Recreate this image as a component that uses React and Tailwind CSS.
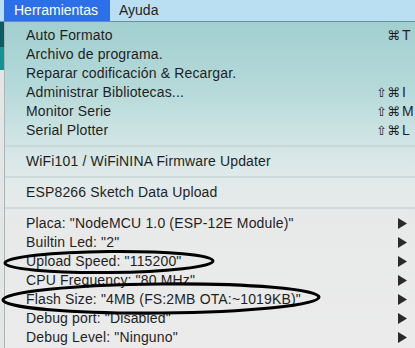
import React from "react";

const Arrow = () => (
  <svg width="9" height="11" viewBox="0 0 9 11" className="block">
    <polygon points="0,0 9,5.5 0,11" fill="#2a2a2a" />
  </svg>
);

function Row({ label, mods, keyc, arrow }) {
  return (
    <div className="h-[19px] flex items-center relative">
      <span className="pl-[21px] whitespace-nowrap tracking-[0.15px]">{label}</span>
      {keyc && (
        <span className="absolute left-[363px] top-0 h-[19px] flex items-center">
          <span className="w-[32px] text-right font-['DejaVu_Sans',sans-serif] text-[13px] whitespace-nowrap">{mods}</span>
          <span className="pl-[2px]">{keyc}</span>
        </span>
      )}
      {arrow && (
        <span className="absolute left-[393px] top-[4px]">
          <Arrow />
        </span>
      )}
    </div>
  );
}

const Sep = () => (
  <div className="h-[12px] flex items-center">
    <div className="h-[2px] w-full bg-[#c9d4d4]/80" />
  </div>
);

export default function App() {
  return (
    <div className="w-[415px] h-[348px] overflow-hidden relative font-['Liberation_Sans',Arial,sans-serif] text-[14px] text-[#1f1f1f] bg-[#e8e8e8]">
      <div className="h-[22px] flex items-stretch bg-[#bbdff2] border-b border-[#6a9199]">
        <div className="w-[4px]" />
        <div className="bg-[#2c6fe9] text-white flex items-center pl-[10px] pr-[9px] w-[106px]">Herramientas</div>
        <div className="flex items-center pl-[9px]">Ayuda</div>
      </div>
      <div className="flex h-[326px]">
        <div className="w-[4px] flex flex-col">
          <div className="h-[25px] bg-[#0b5d62]" />
          <div className="h-[23px] bg-[#139490]" />
          <div className="flex-1 bg-[#e4e6e6]" />
        </div>
        <div className="flex-1 border-l border-[#a9b6b8] pt-[4px] bg-[linear-gradient(to_bottom,#a2cfd0_0%,#b5d9d9_20%,#cfe4e4_36%,#e1eaea_48%,#e8e9e9_62%,#ebebeb_100%)]">
          <Row label="Auto Formato" mods="⌘" keyc="T" />
          <Row label="Archivo de programa." />
          <Row label="Reparar codificación & Recargar." />
          <Row label="Administrar Bibliotecas..." mods="⇧⌘" keyc="I" />
          <Row label="Monitor Serie" mods="⇧⌘" keyc="M" />
          <Row label="Serial Plotter" mods="⇧⌘" keyc="L" />
          <Sep />
          <Row label="WiFi101 / WiFiNINA Firmware Updater" />
          <Sep />
          <Row label="ESP8266 Sketch Data Upload" />
          <Sep />
          <Row label={'Placa: "NodeMCU 1.0 (ESP-12E Module)"'} arrow />
          <Row label={'Builtin Led: "2"'} arrow />
          <Row label={'Upload Speed: "115200"'} arrow />
          <Row label={'CPU Frequency: "80 MHz"'} arrow />
          <Row label={'Flash Size: "4MB (FS:2MB OTA:~1019KB)"'} arrow />
          <Row label={'Debug port: "Disabled"'} arrow />
          <Row label={'Debug Level: "Ninguno"'} arrow />
        </div>
      </div>
      <svg className="absolute left-0 top-0 pointer-events-none" width="415" height="348">
        <ellipse cx="109" cy="262" rx="104" ry="10.5" fill="none" stroke="#000" strokeWidth="3" transform="rotate(-0.6 109 262)" />
        <ellipse cx="161" cy="298.5" rx="158" ry="14.5" fill="none" stroke="#000" strokeWidth="3.2" transform="rotate(-0.5 161 298.5)" />
      </svg>
    </div>
  );
}
